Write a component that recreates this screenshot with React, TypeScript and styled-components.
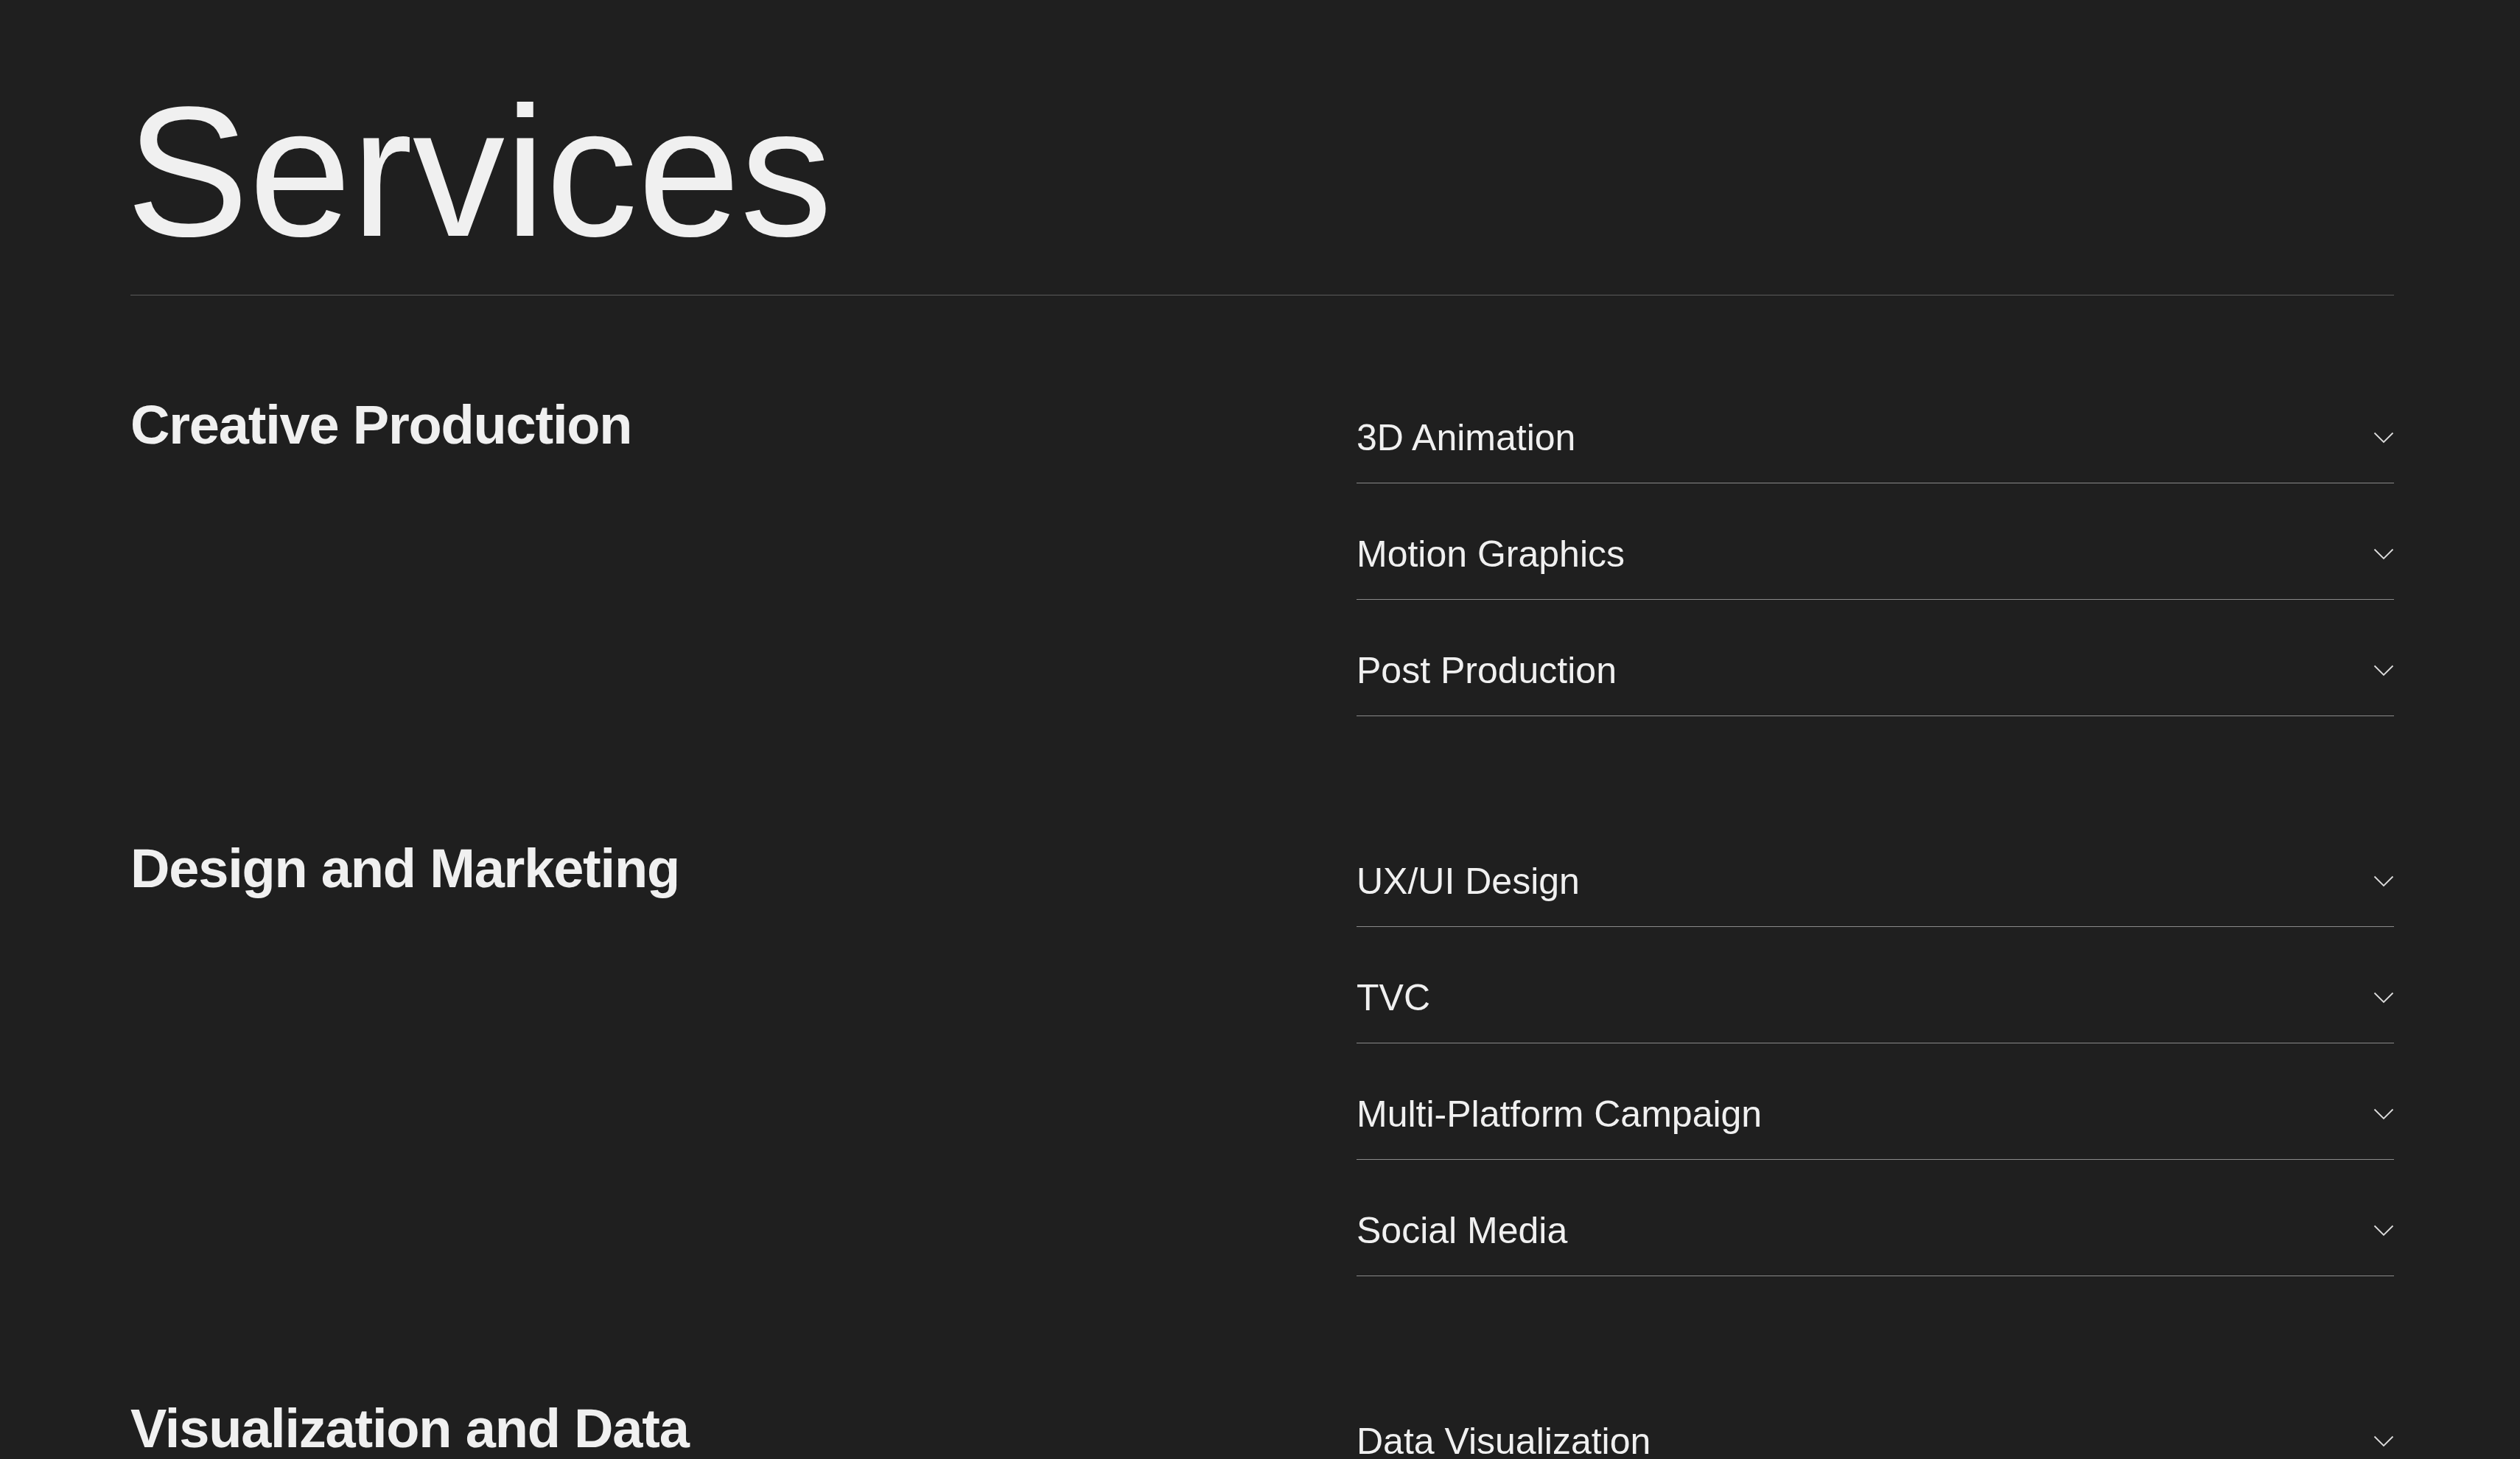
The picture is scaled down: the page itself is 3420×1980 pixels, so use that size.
import React from "react";
import styled, { createGlobalStyle } from "styled-components";

const GlobalStyle = createGlobalStyle`
  html, body {
    margin: 0;
    padding: 0;
    background: #1f1f1f;
  }
  body {
    font-family: "Liberation Sans", Arial, Helvetica, sans-serif;
    color: #f0f0f0;
  }
`;

const Page = styled.main`
  padding: 109px 171px 120px 177px;
  min-height: 1980px;
  box-sizing: border-box;
  background: #1f1f1f;
`;

const Title = styled.h1`
  margin: 0 0 41px -6px;
  font-size: 250px;
  line-height: 1;
  font-weight: 400;
  letter-spacing: 0;
  color: #f0f0f0;
`;

const Rule = styled.div`
  height: 1px;
  background: #5a5a5a;
`;

const SectionList = styled.div`
  display: flex;
  flex-direction: column;
  gap: 128px;
  padding-top: 97px;
`;

const Section = styled.section`
  display: grid;
  grid-template-columns: 1fr 1fr;
  column-gap: 256px;
  align-items: start;
`;

const CategoryTitle = styled.h2`
  margin: 0;
  padding-top: 42px;
  font-size: 74px;
  line-height: 1;
  font-weight: 700;
  letter-spacing: -1.2px;
  color: #f0f0f0;
`;

const ItemList = styled.ul`
  list-style: none;
  margin: 0;
  padding: 0;
`;

const ItemRow = styled.li`
  display: flex;
  align-items: center;
  justify-content: space-between;
  padding: 71px 0 36px;
  border-bottom: 1px solid #8a8a8a;
  cursor: pointer;
`;

const ItemLabel = styled.span`
  font-size: 50px;
  line-height: 1;
  font-weight: 400;
  color: #f0f0f0;
`;

const Chevron = styled.svg`
  width: 28px;
  height: 16px;
  flex-shrink: 0;
`;

const ChevronDown = () => (
  <Chevron viewBox="0 0 28 16" fill="none">
    <polyline
      points="1.5,1.5 14,14 26.5,1.5"
      stroke="#dcdcdc"
      strokeWidth="1.8"
      strokeLinecap="butt"
      strokeLinejoin="miter"
    />
  </Chevron>
);

const services = [
  {
    category: "Creative Production",
    items: ["3D Animation", "Motion Graphics", "Post Production"],
  },
  {
    category: "Design and Marketing",
    items: ["UX/UI Design", "TVC", "Multi-Platform Campaign", "Social Media"],
  },
  {
    category: "Visualization and Data",
    items: ["Data Visualization"],
  },
];

export default function App() {
  return (
    <>
      <GlobalStyle />
      <Page>
        <Title>Services</Title>
        <Rule />
        <SectionList>
          {services.map((s) => (
            <Section key={s.category}>
              <CategoryTitle>{s.category}</CategoryTitle>
              <ItemList>
                {s.items.map((item) => (
                  <ItemRow key={item}>
                    <ItemLabel>{item}</ItemLabel>
                    <ChevronDown />
                  </ItemRow>
                ))}
              </ItemList>
            </Section>
          ))}
        </SectionList>
      </Page>
    </>
  );
}
